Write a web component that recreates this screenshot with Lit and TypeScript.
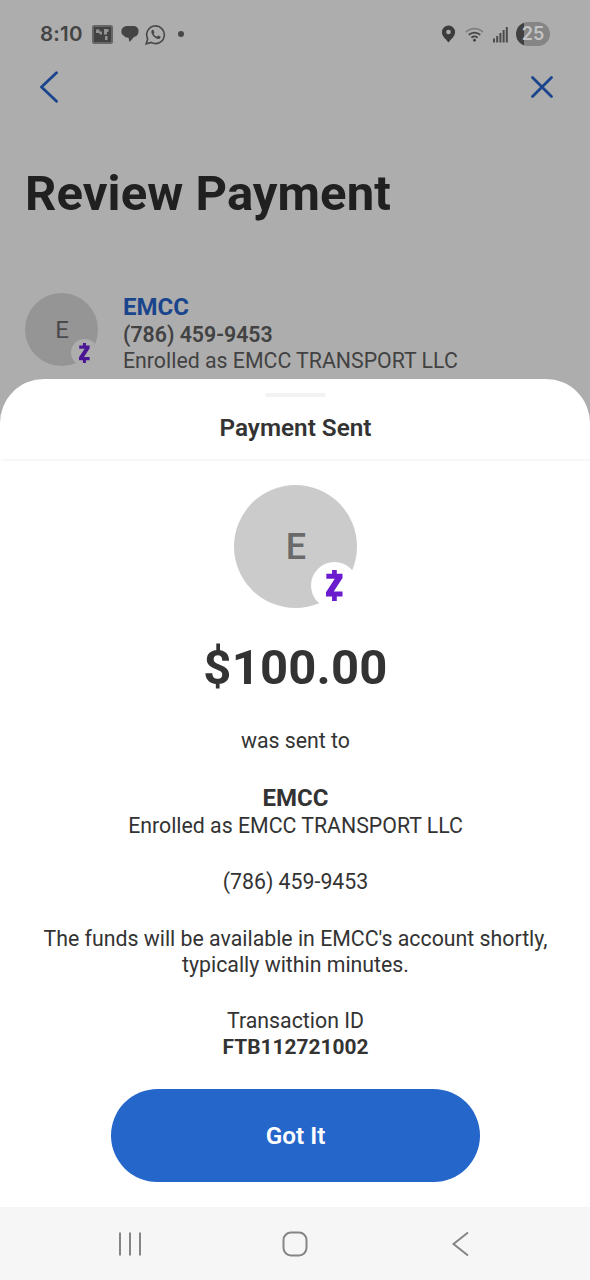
import { LitElement, css, html } from 'lit';
import { customElement, property } from 'lit/decorators.js';

interface Recipient {
  name: string;
  phone: string;
  enrolledAs: string;
}

const recipient: Recipient = {
  name: 'EMCC',
  phone: '(786) 459-9453',
  enrolledAs: 'Enrolled as EMCC TRANSPORT LLC',
};

@customElement('status-bar')
export class StatusBarEl extends LitElement {
  static override styles = css`
    :host {
      display: flex;
      align-items: center;
      height: 68px;
      padding: 0 40px;
      box-sizing: border-box;
      color: #444;
    }
    svg {
      display: block;
      flex: none;
    }
    .time {
      width: 52px;
      font: 600 20.5px/24px Inter, sans-serif;
      letter-spacing: 0.2px;
    }
    .wifi {
      margin-left: 9px;
    }
    .signal {
      margin-left: 9px;
    }
    .chat {
      margin-left: 8px;
    }
    .phone {
      margin-left: 6px;
    }
    .dot {
      width: 6px;
      height: 6px;
      margin-left: 12px;
      border-radius: 50%;
      background: #484848;
    }
    .spacer {
      flex: 1;
    }
    .battery {
      width: 34px;
      height: 24px;
      margin-left: 7px;
      border-radius: 12px;
      background: linear-gradient(to right, #414141 8px, #858585 8px);
      color: #c4c4c4;
      font: 600 18px/24px Inter, sans-serif;
      text-align: center;
    }
  `;

  override render() {
    return html`
      <span class="time">8:10</span>
      <svg width="21" height="19" viewBox="0 0 21 19">
        <rect x="1" y="1" width="19" height="17" rx="1.5" fill="#424242" stroke="#666" stroke-width="2" />
        <path d="M4 4.500h3.500v2H10v3H7.500V8H4zM12 4h4.500v3H15v2.500h-3zM13 11h2.500v4H13z" fill="#929292" />
      </svg>
      <svg class="chat" width="18" height="18" viewBox="0 0 18 18">
        <path
          d="M6.500 1H12c3.500 0 5.600 2 5.600 5.200 0 3-1.600 4.800-4.600 5.800L8.500 17l-1-4.300C5 12.700 3.500 12 2.800 10.500 1.200 10 .4 8.500.4 6.500.4 3.200 3 1 6.500 1z"
          fill="#444"
        />
      </svg>
      <svg class="phone" width="21" height="21" viewBox="0 0 21 21">
        <path
          d="M1.200 19.800l1.500-5A8.800 8.800 0 1 1 6.200 18.400z"
          fill="none"
          stroke="#484848"
          stroke-width="1.600"
        />
        <path
          d="M7.400 5.800c-1.700 1-1.400 3.200.3 5.500s4.200 4 6.200 3.600c1.300-.3 1.800-1.400 1.600-2.300l-2.400-1.100-1.100 1.300c-1.600-.6-2.700-1.700-3.400-3.100l.9-1.200-1-2.500z"
          fill="#484848"
        />
      </svg>
      <span class="dot"></span>
      <span class="spacer"></span>
      <svg width="15" height="18" viewBox="0 0 15 18">
        <path
          fill-rule="evenodd"
          d="M7.500.5a6.600 6.600 0 0 1 6.600 6.700C14.100 11.500 9.500 14.500 7.500 17.500 5.500 14.500.9 11.500.9 7.200A6.600 6.600 0 0 1 7.500.5zm0 4.200a2.300 2.300 0 1 0 0 4.600 2.300 2.300 0 0 0 0-4.600z"
          fill="#3c3c3c"
        />
      </svg>
      <svg class="wifi" width="19" height="17" viewBox="0 0 20 17" fill="none" stroke-width="1.900">
        <path d="M1 6a12.700 12.700 0 0 1 18 0" stroke="#808080" />
        <path d="M4 9a8.500 8.500 0 0 1 12 0" stroke="#444" />
        <path d="M6.800 11.900a4.600 4.600 0 0 1 6.400 0" stroke="#444" />
        <circle cx="10" cy="14.500" r="1.500" fill="#444" />
      </svg>
      <svg class="signal" width="16" height="17" viewBox="0 0 16 17" fill="#4c4c4c">
        <rect x="0" y="12.500" width="2" height="4" />
        <rect x="3.200" y="10" width="2" height="6.500" />
        <rect x="6.400" y="7" width="2" height="9.500" />
        <rect x="9.600" y="4" width="2" height="12.500" />
        <rect x="12.800" y="1" width="2" height="15.500" />
      </svg>
      <span class="battery">25</span>
    `;
  }
}

@customElement('recipient-avatar')
export class RecipientAvatarEl extends LitElement {
  @property()
  initial = '';

  static override styles = css`
    :host {
      display: flex;
      flex: none;
      align-items: center;
      justify-content: center;
      position: relative;
      width: var(--avatar-size);
      height: var(--avatar-size);
      border-radius: 50%;
      background: var(--avatar-bg);
      color: var(--avatar-fg);
    }
    .initial {
      padding-left: 1px;
    }
    .badge {
      position: absolute;
      right: var(--badge-offset);
      bottom: var(--badge-offset);
      display: flex;
      align-items: center;
      justify-content: center;
      width: var(--badge-size);
      height: var(--badge-size);
      border-radius: 50%;
      background: var(--badge-bg);
      color: var(--badge-fg);
    }
    .badge svg {
      width: auto;
      height: var(--mark-height);
    }
  `;

  override render() {
    return html`
      <span class="initial">${this.initial}</span>
      <span class="badge">
        <svg viewBox="0 0 49 92" fill="currentColor">
          <path d="M18 0h14v11h17v13L23 64h26v15H32v13H18V79H0V66l26-40H1V11h17z" />
        </svg>
      </span>
    `;
  }
}

@customElement('app-root')
export class AppRootEl extends LitElement {
  static override styles = css`
    :host {
      display: flex;
      flex-direction: column;
      width: 590px;
      height: 1280px;
      overflow: hidden;
      background: #adadad;
      color: #333;
      font-family: Roboto, sans-serif;
      font-size: 21.3px;
      line-height: 26px;
    }
    svg {
      display: block;
    }
    h1,
    h2,
    p {
      margin: 0;
    }
    .page {
      height: 379px;
      flex: none;
    }
    .toolbar {
      display: flex;
      align-items: center;
      justify-content: space-between;
      height: 38px;
      padding: 0 36px 0 39px;
    }
    .page h1 {
      margin: 59px 0 0 25px;
      color: #202020;
      font-size: 49px;
      font-weight: 700;
      line-height: 58px;
      letter-spacing: 0.08px;
    }
    .payee {
      display: flex;
      gap: 25px;
      margin: 70px 0 0 25px;
      color: #424242;
    }
    .payee recipient-avatar {
      --avatar-size: 73px;
      --avatar-bg: #959595;
      --avatar-fg: #4a4a4a;
      --badge-size: 27px;
      --badge-offset: 0px;
      --badge-bg: #adadad;
      --badge-fg: #4b1694;
      --mark-height: 20px;
      font-size: 24px;
    }
    .payee .name {
      color: #1a458c;
      font-size: 24px;
      font-weight: 700;
      line-height: 29px;
    }
    .payee .phone {
      font-weight: 600;
    }
    .sheet {
      display: flex;
      flex-direction: column;
      align-items: center;
      flex: 1;
      padding-left: 1px;
      border-radius: 44px 44px 0 0;
      background: #fff;
      text-align: center;
    }
    .sheet header {
      display: flex;
      flex-direction: column;
      align-items: center;
      align-self: stretch;
      height: 80px;
      border-bottom: 2px solid #f8f8f8;
    }
    .handle {
      width: 61px;
      height: 4px;
      margin: 14px 0 16px;
      border-radius: 2px;
      background: #f2f2f2;
    }
    .sheet h2 {
      font-size: 24.3px;
      font-weight: 600;
      line-height: 30px;
    }
    .sheet recipient-avatar {
      --avatar-size: 123px;
      --avatar-bg: #cbcbcb;
      --avatar-fg: #6a6a6a;
      --badge-size: 47px;
      --badge-offset: -1px;
      --badge-bg: #fff;
      --badge-fg: #6a1bce;
      --mark-height: 31px;
      margin-top: 24px;
      font-size: 36px;
      font-weight: 500;
    }
    .amount {
      margin-top: 30px;
      font-size: 49px;
      font-weight: 700;
      line-height: 59px;
      letter-spacing: 0.2px;
    }
    .sent-to {
      margin-top: 31px;
    }
    .sheet .name {
      margin-top: 30px;
      font-size: 24px;
      font-weight: 700;
      line-height: 29px;
    }
    .group {
      margin-top: 30px;
    }
    .message {
      margin-top: 31px;
    }
    .transaction-id {
      font-size: 20.9px;
      font-weight: 700;
    }
    .done {
      width: 369px;
      height: 93px;
      margin-top: 29px;
      padding: 0;
      border: 0;
      border-radius: 47px;
      background: #2566ca;
      color: #fff;
      font: 600 24.3px/30px Roboto, sans-serif;
    }
    .nav {
      display: flex;
      align-items: center;
      justify-content: center;
      gap: 140px;
      height: 73px;
      flex: none;
      background: #f6f6f6;
    }
  `;

  override render() {
    const initial = recipient.name[0];
    return html`
      <section class="page">
        <status-bar></status-bar>
        <div class="toolbar">
          <svg width="20" height="32" viewBox="0 0 20 32" fill="none" stroke="#1a458c" stroke-width="2.800" stroke-linecap="round" stroke-linejoin="round">
            <path d="M17.500 1.800L2.500 16l15 14.200" />
          </svg>
          <svg width="24" height="24" viewBox="0 0 24 24" fill="none" stroke="#1a458c" stroke-width="2.800" stroke-linecap="round">
            <path d="M2.500 2.500l19 19M21.500 2.500l-19 19" />
          </svg>
        </div>
        <h1>Review Payment</h1>
        <div class="payee">
          <recipient-avatar .initial=${initial}></recipient-avatar>
          <div>
            <p class="name">${recipient.name}</p>
            <p class="phone">${recipient.phone}</p>
            <p>${recipient.enrolledAs}</p>
          </div>
        </div>
      </section>

      <section class="sheet">
        <header>
          <div class="handle"></div>
          <h2>Payment Sent</h2>
        </header>
        <recipient-avatar .initial=${initial}></recipient-avatar>
        <p class="amount">$100.00</p>
        <p class="sent-to">was sent to</p>
        <p class="name">${recipient.name}</p>
        <p>${recipient.enrolledAs}</p>
        <p class="group">${recipient.phone}</p>
        <p class="message">
          The funds will be available in ${recipient.name}'s account shortly,<br />
          typically within minutes.
        </p>
        <p class="group">Transaction ID</p>
        <p class="transaction-id">FTB112721002</p>
        <button class="done">Got It</button>
      </section>

      <nav class="nav">
        <svg width="24" height="26" viewBox="0 0 24 26" stroke="#858585" stroke-width="2">
          <path d="M2 1.500v23M12 1.500v23M22 1.500v23" />
        </svg>
        <svg width="26" height="26" viewBox="0 0 26 26" fill="none" stroke="#858585" stroke-width="2">
          <rect x="1.500" y="1.500" width="23" height="23" rx="7.500" />
        </svg>
        <svg width="24" height="26" viewBox="0 0 24 26" fill="none" stroke="#858585" stroke-width="2">
          <path d="M20 1.500L5.500 13L20 24.500" />
        </svg>
      </nav>
    `;
  }
}

declare global {
  interface HTMLElementTagNameMap {
    'app-root': AppRootEl;
    'status-bar': StatusBarEl;
    'recipient-avatar': RecipientAvatarEl;
  }
}
